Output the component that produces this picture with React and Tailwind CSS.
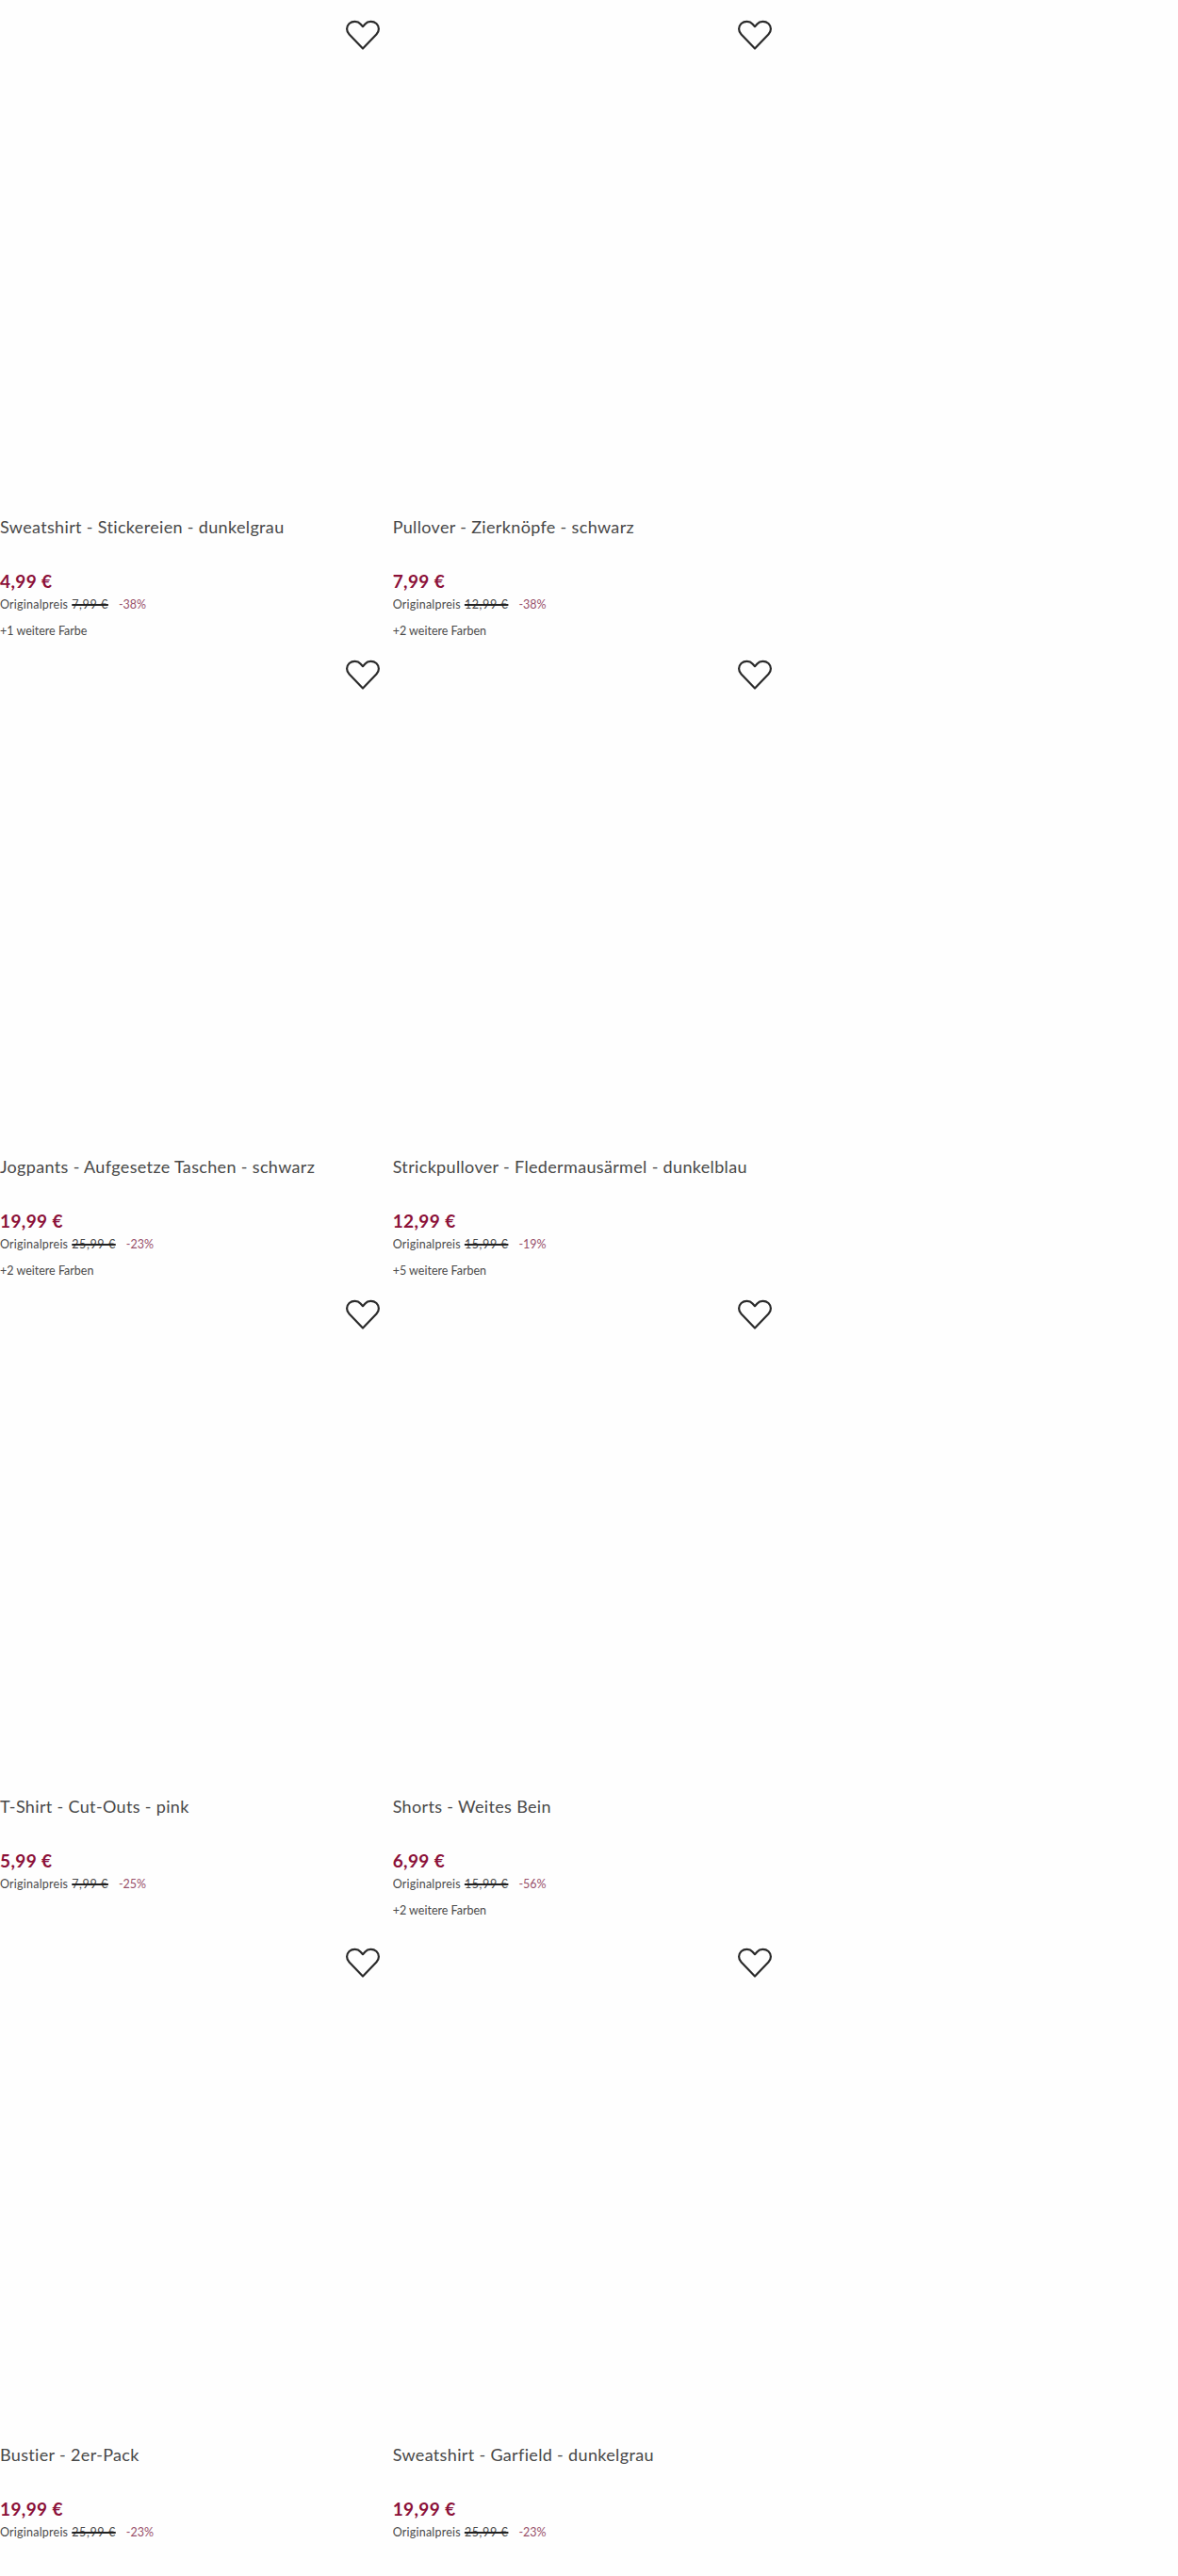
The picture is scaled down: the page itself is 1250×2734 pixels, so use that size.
const items = [
  ["Sweatshirt - Stickereien - dunkelgrau", "4,99 €", "7,99 €", "-38%", "+1 weitere Farbe"],
  ["Pullover - Zierknöpfe - schwarz", "7,99 €", "12,99 €", "-38%", "+2 weitere Farben"],
  ["Jogpants - Aufgesetze Taschen - schwarz", "19,99 €", "25,99 €", "-23%", "+2 weitere Farben"],
  ["Strickpullover - Fledermausärmel - dunkelblau", "12,99 €", "15,99 €", "-19%", "+5 weitere Farben"],
  ["T-Shirt - Cut-Outs - pink", "5,99 €", "7,99 €", "-25%", null],
  ["Shorts - Weites Bein", "6,99 €", "15,99 €", "-56%", "+2 weitere Farben"],
  ["Bustier - 2er-Pack", "19,99 €", "25,99 €", "-23%", null],
  ["Sweatshirt - Garfield - dunkelgrau", "19,99 €", "25,99 €", "-23%", null],
];

function Heart() {
  return (
    <svg width="36" height="32" viewBox="0 0 36 32" fill="none" stroke="#2b2b2b" strokeWidth="2.2" strokeLinejoin="round" strokeLinecap="round">
      <path d="M18 30.5 L3.6 15.6 C0.2 12 0.4 7 3.6 4 C7 1 12.5 1 15.5 4.4 L18 7.2 L20.5 4.4 C23.5 1 29 1 32.4 4 C35.6 7 35.8 12 32.4 15.6 Z" />
    </svg>
  );
}

function Card({ item, tall }) {
  const [title, price, orig, pct, more] = item;
  return (
    <div className={tall ? "h-[688px]" : "h-[679px]"}>
      <div className="h-[543px] flex justify-end items-start pt-[21px] pr-[14px]">
        <Heart />
      </div>
      <div className="h-[34px] text-[18px] leading-[33px] text-[#484848] tracking-[0.34px] whitespace-nowrap">{title}</div>
      <div className="mt-[27px] text-[19px] leading-[26px] font-bold text-[#8b1038] tracking-[0.4px]">{price}</div>
      <div className="mt-[2px] flex items-center h-[20px] text-[12.5px] text-[#4a4a4a]">
        <span className="tracking-[0.22px]">Originalpreis</span>
        <span className="ml-[4px] tracking-[0.6px] line-through decoration-[#222222] decoration-[1.5px]">{orig}</span>
        <span className="ml-[11px] text-[#98506a]">{pct}</span>
      </div>
      {more && <div className="mt-[8px] h-[20px] leading-[20px] text-[12.5px] text-[#4a4a4a]">{more}</div>}
    </div>
  );
}

export default function App() {
  return (
    <div className="w-[1250px] h-[2734px] bg-[#fefefe] overflow-hidden font-['Lato','Liberation_Sans',sans-serif]">
      <div className="grid grid-cols-3 w-[1250px]">
        {items.flatMap((it, i) => {
          const out = [<Card key={i} item={it} tall={i === 4 || i === 5} />];
          if (i % 2 === 1) out.push(<div key={"e" + i} />);
          return out;
        })}
      </div>
    </div>
  );
}
